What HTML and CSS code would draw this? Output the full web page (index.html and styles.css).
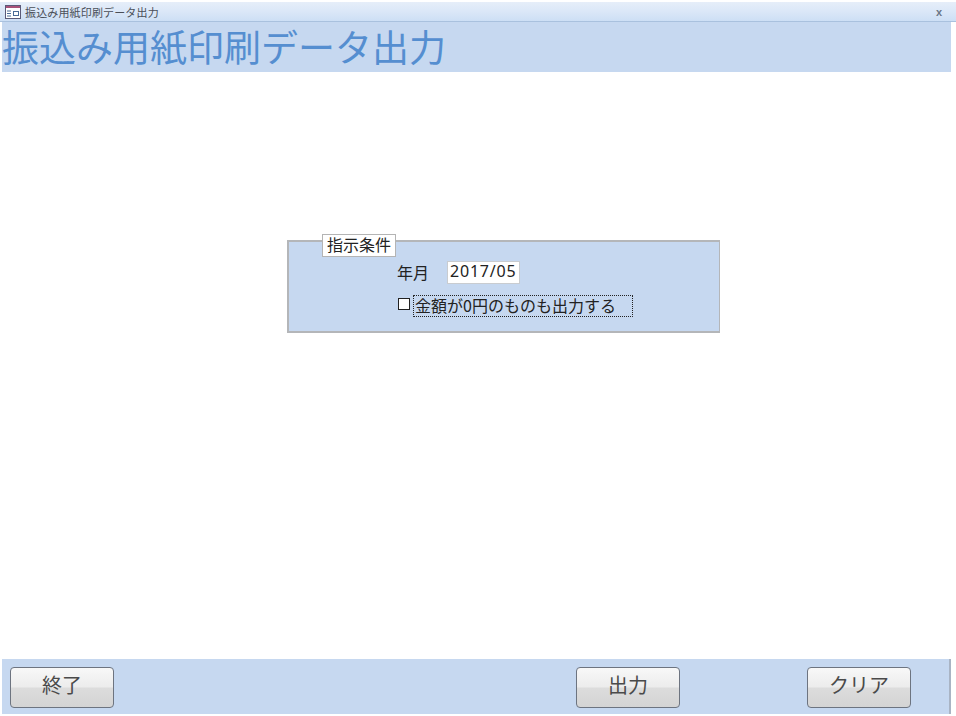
FILE: index.html
```html
<!DOCTYPE html>
<html lang="ja">

<head>
    <meta charset="UTF-8">
    <title>振込み用紙印刷データ出力</title>
    <link rel="stylesheet" href="styles.css">
</head>

<body>
    <div class="window">
        <div class="titlebar">
            <svg class="form-icon" width="16" height="14" viewBox="0 0 16 14">
                <rect x="0.5" y="0.5" width="15" height="13" fill="#fff" stroke="#5a5a78" />
                <rect x="1" y="1" width="14" height="2" fill="#a8527a" />
                <path d="M2 6h4M2 8.500h4M2 11h4" stroke="#4a6a96" fill="none" />
                <rect x="8.500" y="6.500" width="5" height="4" fill="none" stroke="#4a6a96" />
            </svg>
            <span class="titlebar-text">振込み用紙印刷データ出力</span>
            <span class="close">x</span>
        </div>
        <header class="form-header">振込み用紙印刷データ出力</header>

        <main class="detail">
            <section class="group">
                <div class="legend">指示条件</div>
                <div class="row-month">
                    <label class="month-label">年月</label>
                    <div class="textbox">2017/05</div>
                </div>
                <div class="row-check">
                    <span class="checkbox"></span>
                    <span class="check-label">金額が0円のものも出力する</span>
                </div>
            </section>
        </main>

        <footer class="form-footer">
            <button class="btn">終了</button>
            <div class="footer-right">
                <button class="btn">出力</button>
                <button class="btn">クリア</button>
            </div>
        </footer>
    </div>
</body>

</html>
```

FILE: styles.css
```css
html,
body {
    height: 100%;
}

body {
    margin: 0;
    background-color: #fff;
    font-family: "Noto Sans CJK JP", "Liberation Sans", sans-serif;
    color: #222;
    overflow: hidden;
}

.window {
    display: flex;
    flex-direction: column;
    box-sizing: border-box;
    height: 714px;
    padding-top: 2px;
}

/* title bar */
.titlebar {
    display: flex;
    align-items: center;
    height: 20px;
    box-sizing: border-box;
    padding: 0 14px 0 5px;
    background: linear-gradient(#e6eef9, #dce8f8 45%, #cddff5);
    border-bottom: 1px solid #a9c1de;
}

.form-icon {
    flex: none;
}

.titlebar-text {
    flex: 1;
    margin-left: 4px;
    font-size: 11px;
    letter-spacing: 0.15px;
    color: #4a4f58;
}

.close {
    font-family: "Liberation Sans", sans-serif;
    font-size: 11px;
    font-weight: bold;
    color: #6a7686;
}

/* header */
.form-header {
    height: 50px;
    margin: 0 5px 0 2px;
    background-color: #c6d8f0;
    color: #558ed0;
    font-size: 37px;
    line-height: 48px;
    white-space: nowrap;
}

/* detail */
.detail {
    flex: 1;
    padding: 168px 0 0 287px;
}

.group {
    position: relative;
    box-sizing: border-box;
    width: 433px;
    height: 93px;
    padding: 19px 0 0 108px;
    background-color: #c6d8f0;
    border: 1px solid #b4b6b9;
    border-width: 2px 1px 2px 2px;
}

.legend {
    position: absolute;
    left: 33px;
    top: -8px;
    box-sizing: border-box;
    width: 74px;
    height: 23px;
    border: 1px solid #b4b4b4;
    background-color: #fff;
    font-size: 16px;
    line-height: 19px;
    text-align: center;
}

.row-month {
    display: flex;
    align-items: center;
    height: 23px;
}

.month-label {
    width: 50px;
    padding: 0 0 2px;
    font-size: 16px;
    line-height: 20px;
}

.textbox {
    box-sizing: border-box;
    width: 73px;
    height: 23px;
    border: 1px solid #c9ccd0;
    background-color: #fff;
    padding-left: 2px;
    font-family: "Noto Sans", "Liberation Sans", sans-serif;
    font-size: 16px;
    line-height: 19px;
    letter-spacing: 0.8px;
}

.row-check {
    display: flex;
    align-items: center;
    margin-top: 11px;
}

.checkbox {
    box-sizing: border-box;
    width: 12px;
    height: 12px;
    margin: 0 3px 4px 1px;
    border: 1px solid #222;
    background-color: #fff;
}

.check-label {
    box-sizing: border-box;
    width: 220px;
    height: 22px;
    padding-left: 1px;
    border: 1px dotted #222;
    border-radius: 1px;
    font-size: 16px;
    line-height: 19px;
    white-space: nowrap;
}

/* footer */
.form-footer {
    display: flex;
    justify-content: space-between;
    align-items: center;
    height: 55px;
    box-sizing: border-box;
    margin: 0 5px 0 2px;
    padding: 1px 38px 0 8px;
    background-color: #c6d8f0;
    border-right: 2px solid #a9b4c4;
}

.footer-right {
    display: flex;
    gap: 127px;
}

.btn {
    width: 104px;
    height: 41px;
    padding: 0 0 5px;
    border: 1px solid #6d7480;
    border-radius: 4px;
    background: linear-gradient(#f8f8f8, #ececec 48%, #dcdcdc 52%, #d4d4d4);
    color: #4a4a4a;
    font-family: "Noto Sans CJK JP", sans-serif;
    font-size: 20px;
}
```
